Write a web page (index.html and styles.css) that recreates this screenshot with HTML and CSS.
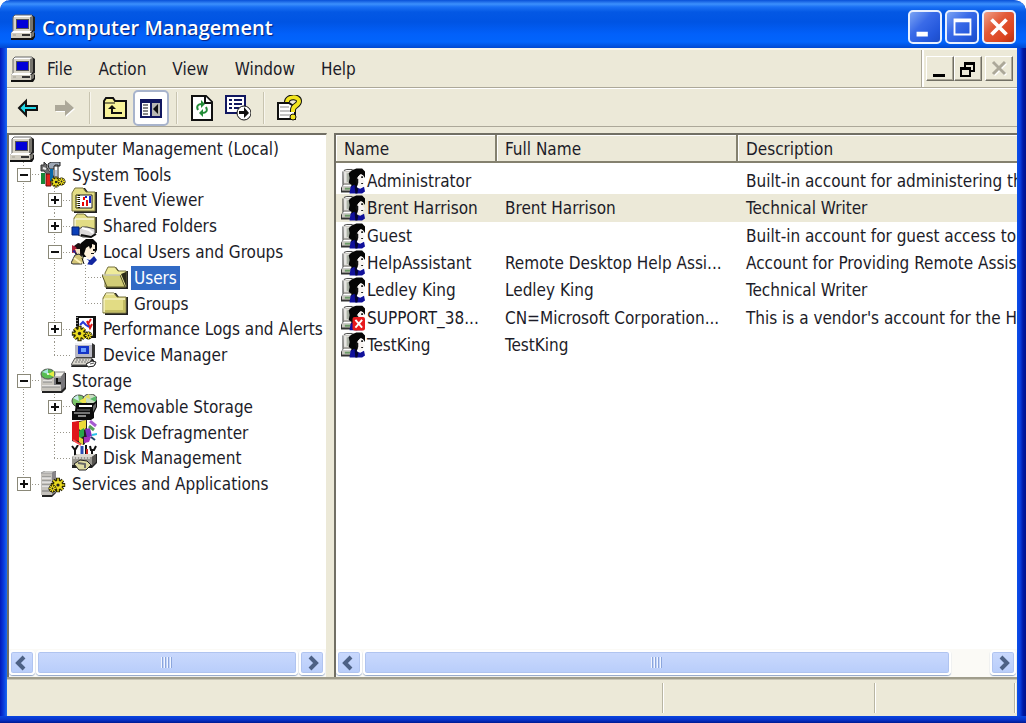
FILE: index.html
```html
<!DOCTYPE html>
<html lang="en">
<head>
<meta charset="utf-8">
<title>Computer Management</title>
<link rel="stylesheet" href="styles.css">
</head>
<body>
<svg class="defs" width="0" height="0" aria-hidden="true">
  <defs>
    <symbol id="gear" viewBox="-10 -10 20 20">
      <path d="M0-9V9M-9 0H9M-6-6L6 6M6-6L-6 6" stroke="#2c2800" stroke-width="5"/><circle r="6" fill="#2c2800"/>
      <path d="M0-8V8M-8 0H8M-6-6L6 6M6-6L-6 6" stroke="#ecdc20" stroke-width="2"/><circle r="5" fill="#ecdc20"/><circle r="2" fill="#222"/>
    </symbol>
    <symbol id="pc" viewBox="0 0 26 26">
      <path d="M6 1h16l3 2v14l-3 2H4V3z" fill="#222"/>
      <path d="M5 1h17v16H3V4z" fill="#d8d4c8"/><path d="M3 3l2-2h17l-2 2z" fill="#fff"/><path d="M3 3v14M3 3l2-2h17" stroke="#666" fill="none"/><path d="M20 3l3-1v14l-3 2z" fill="#77756e"/>
      <path d="M6 5h13v10H6z" fill="#555"/><path d="M7 6h11v8H7z" fill="#0000d8"/>
      <path d="M3 17h20l2 2v4l-2 3H1v-7z" fill="#111"/><path d="M3 17h19l-2 2H1z" fill="#fff"/><path d="M1 19h20v5H1z" fill="#d0ccc0"/><path d="M21 19l3-2v5l-3 2z" fill="#77756e"/>
      <path d="M12 20h8v2h-8z" fill="#333"/><path d="M3 20h3v2H3z" fill="#b9b6aa"/>
    </symbol>
    <symbol id="tools" viewBox="0 0 26 26">
      <path d="M1 3h3V0l3 3v3l11 14-3 3L4 9H1z" fill="#6d6d6d" stroke="#333"/><path d="M3 6l3 1" stroke="#eee" stroke-width="2"/>
      <path d="M8 2l3-2h9v4h-2V3h-3v4H9z" fill="#9ca6b4" stroke="#222"/><path d="M14 4h4v14h-4z" fill="#fff" stroke="#222"/><path d="M15 8h2v10h-2z" fill="#b8c4d8"/>
      <path d="M1 11h4v11H1z" fill="#168838"/><path d="M6 12h5v12H6z" fill="#e02018" stroke="#601010"/><path d="M10 7h3v12h-3z" fill="#0868a8"/>
      <use href="#gear" x="10" y="14" width="12" height="12"/><use href="#gear" x="17" y="15" width="9" height="9"/>
    </symbol>
    <symbol id="folder" viewBox="0 0 26 26">
      <path d="M3 7l3-5h8l3 4h9v18H3z" fill="#222"/><path d="M1 7l3-5h8l3 4h9v16H1z" fill="#e2dc84" stroke="#77733e"/><path d="M2 8h21M2 8v13M4 3h8" stroke="#fffde0" fill="none"/><path d="M21 9h2v12H3v-2h18z" fill="#c3bd63"/>
    </symbol>
    <symbol id="folder-open" viewBox="0 0 26 26">
      <path d="M4 7l3-5h7l3 4h9v18H4z" fill="#222"/><path d="M3 8l3-6h7l3 4h8v16H3z" fill="#efeb9a" stroke="#77733e"/><path d="M19 9l5-2v14z" fill="#2b2a18"/><path d="M0 10h18l5 12H5z" fill="#d2cd77" stroke="#555227"/><path d="M1 10h17" stroke="#fff"/>
    </symbol>
    <symbol id="event" viewBox="0 0 26 26">
      <path d="M3 6l3-5h8l3 4h9v21H3z" fill="#222"/><path d="M1 6l3-5h8l3 4h9v19H1z" fill="#e2dc84" stroke="#77733e"/>
      <path d="M5 8h16v13H5z" fill="#fff" stroke="#222"/><path d="M7 8v13" stroke="#111" stroke-width="4" stroke-dasharray="1 1"/><path d="M6 8v13" stroke="#e8e020" stroke-width="1" stroke-dasharray="1 1"/>
      <path d="M13 10v3M12 15v4" stroke="#e00" stroke-width="2"/><path d="M16 13v6" stroke="#e01010" stroke-width="2"/><path d="M19 9v7" stroke="#1020d0" stroke-width="2"/><path d="M15 9v2" stroke="#1020d0" stroke-width="2"/>
    </symbol>
    <symbol id="share" viewBox="0 0 26 26">
      <path d="M4 5l3-4h7l3 3h9v16H4z" fill="#333"/><path d="M3 5l3-4h7l3 3h8v15H3z" fill="#e2dc84" stroke="#77733e"/><path d="M4 6h19M4 6v8" stroke="#fff" fill="none"/>
      <path d="M7 17l4-3h5l8 2v5l-4 3h-8l-5-2z" fill="#dcdadb" stroke="#444"/><path d="M11 15l7 2 4 3" stroke="#fff" stroke-width="2" fill="none"/><path d="M10 22l10 2 5-3" stroke="#111" stroke-width="2" fill="none"/>
      <path d="M1 14h7v8H1z" fill="#0a3fb8" stroke="#052070"/>
    </symbol>
    <symbol id="group" viewBox="0 0 26 26">
      <path d="M3 7l4-3 4 1 2 9-3 5-6-4z" fill="#1a1010"/><path d="M1 6l4 2 2 5-6 1z" fill="#b02038"/><path d="M4 10h5v5H6z" fill="#f4dfc0"/><path d="M1 12l3-1 1 4z" fill="#229"/>
      <path d="M10 4l5-4h7l4 4v7l-2 3-3-2-2 6h-7l-3-7z" fill="#080808"/><path d="M15 9l3-2 1 3 2-2V5l3 1v6l-2 6-5 2-4-5z" fill="#fff2dc"/><path d="M22 10h3v2h-3zM20 14h3v1h-3z" fill="#111"/>
      <path d="M0 24l4-8 4-1 6 5 1 5H2z" fill="#d4c577" stroke="#333"/><path d="M3 19l7 5" stroke="#fff3b8" stroke-width="2"/><path d="M14 25l1-5 4 1 4-4 3 4-5 5z" fill="#1226a0"/><path d="M13 18l5 4-2 4h-5z" fill="#fff"/><path d="M11 19l2 6" stroke="#111"/>
    </symbol>
    <symbol id="perf" viewBox="0 0 26 26">
      <path d="M5 0h20v22H5z" fill="#111"/><path d="M8 2h14v18H8z" fill="#fff"/><path d="M6 1v20" stroke="#fff" stroke-width="1" stroke-dasharray="1 2"/><path d="M17 8l3-5M16 5l3 7 2-4" fill="none" stroke="#e01818" stroke-width="2"/><path d="M9 9l3-3 3 3 3 2" fill="none" stroke="#2838d8" stroke-width="2"/>
      <use href="#gear" x="0" y="9" width="17" height="17"/><use href="#gear" x="13" y="15" width="9" height="9"/>
    </symbol>
    <symbol id="device" viewBox="0 0 26 26">
      <path d="M5 1h16l3 2v13H5z" fill="#333"/><path d="M4 1h17v14H4z" fill="#b8b8c4"/><path d="M4 1h17v2H4z" fill="#f0f0f4"/><path d="M7 4h11v8H7z" fill="#1535c8"/><path d="M10 6h5v4h-5z" fill="#6da0ff"/><path d="M4 17h18l3 5-4 3H0z" fill="#222"/><path d="M4 16h17l-3 7H0z" fill="#dad7ce" stroke="#555"/><path d="M5 18h13M4 20h13" stroke="#777" stroke-dasharray="2 1"/><path d="M15 22l6-3 4 1-2 4-6 1z" fill="#fff" stroke="#222"/><path d="M19 22l4-1" stroke="#555"/>
    </symbol>
    <symbol id="storage" viewBox="0 0 26 26">
      <path d="M2 8l5-3h19v16l-4 4H2z" fill="#222"/><path d="M1 9h20v14H1z" fill="#c7c4bd"/><path d="M1 9l6-5h18l-4 5z" fill="#f4f3ee" stroke="#888"/><path d="M21 9l4-4v14l-4 4z" fill="#77767a"/><ellipse cx="8" cy="6" rx="7" ry="5" fill="#58bd51" stroke="#555"/><path d="M8 6l6-3v6z" fill="#e3ed44"/><path d="M8 6L2 4l6-3z" fill="#a8e4dc"/><circle cx="8" cy="6" r="1" fill="#fff"/><path d="M14 10h7v7h-7z" fill="#77787c"/><path d="M17 10v5h4" fill="none" stroke="#111" stroke-width="2"/><path d="M3 13h9M2 18h18" stroke="#fff"/><path d="M3 14h9M2 19h18" stroke="#888"/>
    </symbol>
    <symbol id="removable" viewBox="0 0 26 26">
      <ellipse cx="8" cy="7" rx="7" ry="6" fill="#7bc668" stroke="#444"/><ellipse cx="19" cy="5" rx="7" ry="5" fill="#c9dcc2" stroke="#444"/><path d="M8 7l7-4v8z" fill="#f0e551"/><path d="M19 5l6-3v6z" fill="#58b86a"/><path d="M8 7L2 4l5-3z" fill="#c9ecec"/><path d="M19 5l-5-2 4-3z" fill="#e5e060"/><path d="M5 9h18l3-3v7l-3 6v5l-3 2H1v-9h3z" fill="#0c0c0c"/><path d="M8 12h13" stroke="#fff" stroke-width="2"/><path d="M6 16h13" stroke="#777"/><path d="M3 19h16" stroke="#ddd" stroke-width="1"/><path d="M7 22h8" stroke="#888" stroke-width="2"/><path d="M22 12l3-3v4l-3 5z" fill="#666"/>
    </symbol>
    <symbol id="defrag" viewBox="0 0 26 26">
      <path d="M1 3l7-2 8-1v20l-3 5-12-4z" fill="#222"/><path d="M1 2l7-1v20l-7-1z" fill="#e0161b"/><path d="M8 2l7-2v8l-4 4-3-3z" fill="#ecdc39"/><path d="M8 11l5-3v8l-5 3z" fill="#28a64a"/><path d="M14 9l5-1 2 8-5 2z" fill="#7c2ec0"/><path d="M13 17h7l-2 5-5 1z" fill="#a430b8"/><path d="M8 17l4 2v6l-4-3z" fill="#e8d43a"/><path d="M2 20l8 5" stroke="#ff5050" stroke-width="2"/><path d="M19 1l6 5" stroke="#a65bd0" stroke-width="3"/><path d="M18 6l5 4" stroke="#58a057" stroke-width="3"/><path d="M21 15l5-1" stroke="#28c0e8" stroke-width="2"/><path d="M20 17l4 3" stroke="#246" stroke-width="2"/>
    </symbol>
    <symbol id="diskmgmt" viewBox="0 0 26 26">
      <path d="M1 1l3 4v5M7 0L4 5M15 0v10M25 1l-2 4h-3l-1-4M21 5v6" fill="none" stroke="#111" stroke-width="2"/><path d="M11 1v9" stroke="#2a4db5" stroke-width="3"/><path d="M16 4v6" stroke="#c22" stroke-width="2"/>
      <path d="M1 12l5-3h20v9l-5 5H1z" fill="#222"/><path d="M1 12h20v8H1z" fill="#98968f"/><path d="M1 12l5-3h19l-4 3z" fill="#dad8d2"/><path d="M21 12l4-3v8l-4 4z" fill="#55534f"/><path d="M2 13h18" stroke="#fff" stroke-dasharray="2 1"/><path d="M3 19l6-4 7 1 4 4-5 5H8z" fill="#dedba2" stroke="#222"/><path d="M7 18l7 1v4" fill="none" stroke="#666" stroke-width="2"/>
    </symbol>
    <symbol id="services" viewBox="0 0 26 26">
      <path d="M2 2l4-2h10v22l-4 4H2z" fill="#222"/><path d="M1 2h11v22H1z" fill="#c4c1bc"/><path d="M1 2l4-2h10l-3 2z" fill="#f7f6f1" stroke="#999"/><path d="M12 2l4-2v21l-4 3z" fill="#88858a"/><path d="M2 6h9M2 10h9M2 14h9M2 20h9" stroke="#777"/><path d="M2 7h9M2 11h9M2 15h9" stroke="#fff"/>
      <use href="#gear" x="10" y="6" width="16" height="16"/><use href="#gear" x="8" y="13" width="9" height="9"/>
    </symbol>
    <symbol id="user" viewBox="0 0 25 26">
      <path d="M3 2l3-1h8v17H2z" fill="#a8a6a1"/><path d="M4 3h9v12H4z" fill="#dddcd6"/><path d="M6 5h6v9H6z" fill="#a9b0a4"/><path d="M4 2h9M4 3v12" stroke="#fff"/><path d="M2 3v14M3 2l3-1h6" fill="none" stroke="#444"/>
      <path d="M2 17h14l2 8H0v-5z" fill="#333"/><path d="M3 17h12l-2 2H1z" fill="#fff"/><path d="M1 19h14v4H1z" fill="#c9c7c0"/><path d="M4 20h6v2H4z" fill="#6b9a68"/>
      <path d="M8 5l3-3 5-2h6l3 3v7l-2-3-3-1-3 4 1 6-3 5-5-1 1-3-3-2 1-5z" fill="#050505"/><path d="M18 8l3-2 2 1-1 3 3 4-2 1v3l-3 2-3-4-1-4z" fill="#f8f4f2"/><path d="M16 10l2 1v4l-1 2-2-4z" fill="#111"/><path d="M21 8h2v2h-2zM21 15h2v1h-2z" fill="#222"/>
      <path d="M9 25l1-6 4-2 3 3 3 1 4-2 1 5-3 2H9z" fill="#10109a"/><path d="M14 17l4 4-1 5h-2z" fill="#050530"/>
    </symbol>
    <symbol id="user-disabled" viewBox="0 0 25 26">
      <use href="#user"/><rect x="12" y="12" width="13" height="14" rx="2" fill="#e81a1c"/><path d="M15 15l7 8m0-8l-7 8" stroke="#fff" stroke-width="2"/>
    </symbol>
  </defs>
</svg>

<div class="window">
  <header class="titlebar">
    <svg class="icon"><use href="#pc"/></svg>
    <h1 class="title">Computer Management</h1>
    <div class="caption-buttons">
      <button class="caption" aria-label="Minimize"><svg viewBox="0 0 32 32"><path d="M7 21h12v5H7z" fill="#fff"/></svg></button>
      <button class="caption" aria-label="Maximize"><svg viewBox="0 0 32 32"><path d="M7 7h19v18H7zM9 11v12h15V11z" fill="#fff" fill-rule="evenodd"/></svg></button>
      <button class="caption caption-close" aria-label="Close"><svg viewBox="0 0 32 32"><path d="M8 8l16 16M24 8L8 24" stroke="#fff" stroke-width="4"/></svg></button>
    </div>
  </header>

  <nav class="menubar">
    <svg class="icon"><use href="#pc"/></svg>
    <div class="menus">
      <button class="menu">File</button>
      <button class="menu">Action</button>
      <button class="menu">View</button>
      <button class="menu">Window</button>
      <button class="menu">Help</button>
    </div>
    <div class="mdi">
      <button class="mdi-button" aria-label="Minimize child window"><svg viewBox="0 0 24 20"><path d="M5 15h12v3H5z"/></svg></button>
      <button class="mdi-button" aria-label="Restore child window"><svg viewBox="0 0 24 20"><path d="M8 3h11v10h-4v5H4V8h4zM10 6v2h5v3h2V6zM6 11v5h7v-5z" fill-rule="evenodd"/></svg></button>
      <button class="mdi-button mdi-close" aria-label="Close child window" disabled><svg viewBox="0 0 24 20"><path d="M7 4l12 12M19 4L7 16" stroke="#fff" stroke-width="3"/><path d="M6 3l12 12M18 3L6 15" stroke="#aca899" stroke-width="3"/></svg></button>
    </div>
  </nav>

  <div class="toolbar" role="toolbar" aria-label="Standard">
    <button class="tool" aria-label="Back"><svg viewBox="0 0 26 26"><path d="M4 13l7-7v5h11v4H11v5z" fill="#20d8e8" stroke="#111" stroke-width="2"/></svg></button>
    <button class="tool" aria-label="Forward" disabled><svg viewBox="0 0 26 26"><path d="M24 14l-9-7v4H5v6h10v5z" fill="#fff"/><path d="M23 13l-9-8v5H4v6h10v5z" fill="#aca899"/></svg></button>
    <span class="sep"></span>
    <button class="tool" aria-label="Up one level"><svg viewBox="0 0 26 26"><path d="M2 6l2-3h7l2 3h11v17H2z" fill="#f8f39a" stroke="#111" stroke-width="2"/><path d="M2 8h11" stroke="#111"/><path d="M10 10l-4 4h3v5h11v-2h-9v-3h3z" fill="#111"/></svg></button>
    <button class="tool tool-on" aria-label="Show console tree" aria-pressed="true"><svg viewBox="0 0 26 26"><path d="M2 4h22v19H2z" fill="#111760"/><path d="M4 8h8v13H4z" fill="#fff"/><path d="M14 8h8v13h-8z" fill="#b9b8b3"/><path d="M5 10h5M5 13h5M5 16h5M5 19h5" stroke="#111"/><path d="M20 9v10l-5-5z" fill="#111"/></svg></button>
    <span class="sep"></span>
    <button class="tool" aria-label="Refresh"><svg viewBox="0 0 26 26"><path d="M3 1h14l6 6v18H3z" fill="#fff" stroke="#111" stroke-width="2"/><path d="M16 1v7h7" fill="#fff" stroke="#111" stroke-width="2"/><path d="M9 15c-2-4 0-6 4-6" fill="none" stroke="#238c38" stroke-width="2"/><path d="M12 5l4 4-4 4z" fill="#238c38"/><path d="M17 12c2 4 0 6-4 6" fill="none" stroke="#238c38" stroke-width="2"/><path d="M14 14l-4 4 4 4z" fill="#238c38"/></svg></button>
    <button class="tool" aria-label="Export list"><svg viewBox="0 0 26 26"><path d="M1 1h19v17H1z" fill="#fff" stroke="#111760" stroke-width="2"/><path d="M4 5h3M9 5h8M4 9h3M9 9h8M4 13h3M9 13h5" stroke="#111760" stroke-width="2"/><circle cx="19" cy="18" r="7" fill="#fff" stroke="#111"/><path d="M14 16h5v-4l5 6-5 5v-4h-5z" fill="#111"/></svg></button>
    <span class="sep"></span>
    <button class="tool" aria-label="Help"><svg viewBox="0 0 26 26"><path d="M2 8h11l6 4v12H2z" fill="#fff" stroke="#111" stroke-width="2"/><path d="M4 12h9M4 16h10M4 20h10" stroke="#888"/><path d="M11 7c0-6 12-6 12-1 0 5-6 4-6 9v2" fill="none" stroke="#111" stroke-width="6"/><path d="M11 7c0-6 12-6 12-1 0 5-6 4-6 9v2" fill="none" stroke="#f3e51f" stroke-width="4"/><circle cx="17" cy="22" r="3" fill="#f3e51f" stroke="#111"/></svg></button>
  </div>

  <main class="panes">
    <section class="pane tree-pane" aria-label="Console tree">
      <ul class="tree">
        <li class="node"><svg class="icon"><use href="#pc"/></svg><span class="label">Computer Management (Local)</span></li>
        <li class="node"><span class="guide tee"><button class="toggle minus" aria-label="Collapse System Tools"></button></span><svg class="icon"><use href="#tools"/></svg><span class="label">System Tools</span></li>
        <li class="node"><span class="guide line"></span><span class="guide tee"><button class="toggle plus" aria-label="Expand Event Viewer"></button></span><svg class="icon"><use href="#event"/></svg><span class="label">Event Viewer</span></li>
        <li class="node"><span class="guide line"></span><span class="guide tee"><button class="toggle plus" aria-label="Expand Shared Folders"></button></span><svg class="icon"><use href="#share"/></svg><span class="label">Shared Folders</span></li>
        <li class="node"><span class="guide line"></span><span class="guide tee"><button class="toggle minus" aria-label="Collapse Local Users and Groups"></button></span><svg class="icon"><use href="#group"/></svg><span class="label">Local Users and Groups</span></li>
        <li class="node"><span class="guide line"></span><span class="guide line"></span><span class="guide tee"></span><svg class="icon"><use href="#folder-open"/></svg><span class="label selected">Users</span></li>
        <li class="node"><span class="guide line"></span><span class="guide line"></span><span class="guide end"></span><svg class="icon"><use href="#folder"/></svg><span class="label">Groups</span></li>
        <li class="node"><span class="guide line"></span><span class="guide tee"><button class="toggle plus" aria-label="Expand Performance Logs and Alerts"></button></span><svg class="icon"><use href="#perf"/></svg><span class="label">Performance Logs and Alerts</span></li>
        <li class="node"><span class="guide line"></span><span class="guide end"></span><svg class="icon"><use href="#device"/></svg><span class="label">Device Manager</span></li>
        <li class="node"><span class="guide tee"><button class="toggle minus" aria-label="Collapse Storage"></button></span><svg class="icon"><use href="#storage"/></svg><span class="label">Storage</span></li>
        <li class="node"><span class="guide line"></span><span class="guide tee"><button class="toggle plus" aria-label="Expand Removable Storage"></button></span><svg class="icon"><use href="#removable"/></svg><span class="label">Removable Storage</span></li>
        <li class="node"><span class="guide line"></span><span class="guide tee"></span><svg class="icon"><use href="#defrag"/></svg><span class="label">Disk Defragmenter</span></li>
        <li class="node"><span class="guide line"></span><span class="guide end"></span><svg class="icon"><use href="#diskmgmt"/></svg><span class="label">Disk Management</span></li>
        <li class="node"><span class="guide end"><button class="toggle plus" aria-label="Expand Services and Applications"></button></span><svg class="icon"><use href="#services"/></svg><span class="label">Services and Applications</span></li>
      </ul>
      <div class="scrollbar">
        <button class="arrow" aria-label="Scroll tree left"><svg viewBox="0 0 20 20"><path d="M12 4l-6 6 6 6"/></svg></button>
        <div class="track"><div class="thumb thumb-full"><span class="grip"></span></div></div>
        <button class="arrow" aria-label="Scroll tree right"><svg viewBox="0 0 20 20"><path d="M8 4l6 6-6 6"/></svg></button>
      </div>
    </section>

    <section class="pane list-pane" aria-label="Users">
      <div class="list">
        <table class="users">
          <colgroup><col class="col-name"><col class="col-full"><col></colgroup>
          <thead><tr><th>Name</th><th>Full Name</th><th>Description</th></tr></thead>
          <tbody>
            <tr><td><div class="name"><svg class="user-icon"><use href="#user"/></svg>Administrator</div></td><td></td><td>Built-in account for administering th</td></tr>
            <tr class="current"><td><div class="name"><svg class="user-icon"><use href="#user"/></svg>Brent Harrison</div></td><td>Brent Harrison</td><td>Technical Writer</td></tr>
            <tr><td><div class="name"><svg class="user-icon"><use href="#user"/></svg>Guest</div></td><td></td><td>Built-in account for guest access to</td></tr>
            <tr><td><div class="name"><svg class="user-icon"><use href="#user"/></svg>HelpAssistant</div></td><td>Remote Desktop Help Assi...</td><td>Account for Providing Remote Assis</td></tr>
            <tr><td><div class="name"><svg class="user-icon"><use href="#user"/></svg>Ledley King</div></td><td>Ledley King</td><td>Technical Writer</td></tr>
            <tr><td><div class="name"><svg class="user-icon"><use href="#user-disabled"/></svg>SUPPORT_38...</div></td><td>CN=Microsoft Corporation...</td><td>This is a vendor's account for the H</td></tr>
            <tr><td><div class="name"><svg class="user-icon"><use href="#user"/></svg>TestKing</div></td><td>TestKing</td><td></td></tr>
          </tbody>
        </table>
      </div>
      <div class="scrollbar">
        <button class="arrow" aria-label="Scroll list left"><svg viewBox="0 0 20 20"><path d="M12 4l-6 6 6 6"/></svg></button>
        <div class="track"><div class="thumb thumb-part"><span class="grip"></span></div></div>
        <button class="arrow" aria-label="Scroll list right"><svg viewBox="0 0 20 20"><path d="M8 4l6 6-6 6"/></svg></button>
      </div>
    </section>
  </main>

  <footer class="statusbar"><span class="status"></span><span class="status"></span><span class="status"></span></footer>
</div>
</body>
</html>
```
FILE: styles.css
```css
* { box-sizing: border-box; }

body {
  margin: 0;
  background: #fff;
  color: #1c1c28;
  font: 17px/24px "DejaVu Sans Condensed", "Noto Sans", sans-serif;
}

button {
  margin: 0;
  padding: 0;
  border: 0;
  background: none;
  color: inherit;
  font: inherit;
}

.defs { display: block; position: absolute; }
.icon { flex: none; width: 26px; height: 26px; }

.window {
  display: flex;
  flex-direction: column;
  height: 100vh;
  overflow: hidden;
  padding: 0 9px 7px 7px;
  border-radius: 10px 12px 0 0;
  background:
    linear-gradient(#0845e0, #0831c8 4px, #001a90) bottom / 100% 7px no-repeat,
    linear-gradient(90deg, #0019b8, #0a3fe0 4px, #1a6af0 7px, transparent 7px),
    linear-gradient(270deg, #00108a, #0019a8 3px, #0a3fe0 6px, #0a50e8 9px, transparent 9px);
}

/* Title bar */
.titlebar {
  display: flex;
  flex: none;
  align-items: center;
  gap: 6px;
  height: 48px;
  margin: 0 -9px 0 -7px;
  padding: 6px 10px 0;
  background: linear-gradient(#0850d8, #3c90fc 4px, #1a70f4 7px, #0458e4 12px, #0054e3 22px, #0260fa 34px, #0264fc 42px, #0048d0 48px);
}
.title {
  flex: 1;
  margin: 0;
  padding-top: 2px;
  color: #fff;
  font: 600 20px/28px "Open Sans", "Noto Sans", sans-serif;
  text-shadow: 1px 1px 1px #0a1f78;
  white-space: nowrap;
}
.caption-buttons { display: flex; gap: 3px; }
.caption {
  width: 34px;
  height: 34px;
  border: 2px solid #e8f0ff;
  border-radius: 5px;
  background: linear-gradient(135deg, #7ca4f4, #3a6be8 40%, #2458dc 75%, #1c4cc8);
}
.caption svg { display: block; width: 30px; height: 30px; }
.caption-close { background: linear-gradient(135deg, #f0a088, #e25a38 40%, #dc4420 75%, #b83010); }

/* Menu bar */
.menubar {
  display: flex;
  flex: none;
  height: 40px;
  align-items: center;
  padding-left: 3px;
  border-top: 2px solid #f8f6ee;
  border-bottom: 1px solid #aca899;
  background: #ece9d8;
}
.menus { display: flex; flex: 1; gap: 26px; padding: 1px 0 0 11px; }
.mdi {
  display: flex;
  align-self: stretch;
  align-items: center;
  padding: 0 4px;
  border-left: 1px solid #aca899;
  box-shadow: inset 2px 0 #fff;
}
.mdi-button {
  width: 28px;
  height: 25px;
  padding: 1px;
  border: 1px solid;
  border-color: #fff #716f64 #716f64 #fff;
  box-shadow: inset -1px -1px #aca899;
}
.mdi-button svg { display: block; width: 24px; height: 20px; }
.mdi-close { margin-left: 3px; }

/* Toolbar */
.toolbar {
  display: flex;
  flex: none;
  align-items: center;
  height: 39px;
  padding-left: 3px;
  border-top: 1px solid #fff;
  border-bottom: 1px solid #aca899;
  background: #ece9d8;
}
.tool {
  display: grid;
  place-items: center;
  width: 36px;
  height: 36px;
  border: 1px solid transparent;
  border-radius: 5px;
}
.tool svg { width: 26px; height: 26px; }
.tool-on { border: 2px solid #a8b4cc; background: #fff; }
.sep {
  width: 2px;
  height: 32px;
  margin: 0 6px 0 7px;
  border-left: 1px solid #c8c4b0;
  border-right: 1px solid #f8f6ee;
}

/* Panes */
.panes {
  display: grid;
  flex: 1;
  grid-template-columns: 320px 1fr;
  gap: 7px;
  min-height: 0;
  padding-top: 6px;
  background: #ece9d8;
}
.pane {
  display: flex;
  flex-direction: column;
  min-width: 0;
  min-height: 0;
  overflow: hidden;
  border-top: 2px solid #716f64;
  border-left: 2px solid #716f64;
  background: #fff;
}
.tree-pane { border-right: 1px solid #ece9d8; }

.tree {
  display: grid;
  flex: none;
  grid-auto-rows: 1fr;
  height: 362px;
  margin: 0;
  padding: 1px 0 0;
  list-style: none;
}
.node { display: flex; min-height: 0; align-items: center; white-space: nowrap; }
.label { margin-left: 3px; padding: 0 3px; }
.selected { background: #316ac5; color: #fff; }

.guide {
  --dots-v: repeating-linear-gradient(#98958a 0 1px, transparent 1px 3px);
  --dots-h: repeating-linear-gradient(90deg, #98958a 0 1px, transparent 1px 3px);
  display: flex;
  flex: none;
  align-items: center;
  width: 31px;
  height: 100%;
  padding-left: 8px;
  background-repeat: no-repeat;
}
.line { background-image: var(--dots-v); background-position: 14px 0; background-size: 1px 100%; }
.tee {
  background-image: var(--dots-v), var(--dots-h);
  background-position: 14px 0, 14px 50%;
  background-size: 1px 100%, 17px 1px;
}
.end {
  background-image: var(--dots-v), var(--dots-h);
  background-position: 14px 0, 14px 50%;
  background-size: 1px 50%, 17px 1px;
}
.toggle {
  width: 14px;
  height: 14px;
  border: 1px solid #8a8878;
  background-color: #fff;
  background-image: linear-gradient(#111, #111), linear-gradient(#111, #111);
  background-position: center;
  background-repeat: no-repeat;
}
.minus { background-size: 8px 2px; }
.plus { background-size: 8px 2px, 2px 8px; }

.node:nth-child(n+11):nth-child(-n+13) .line,
.node:nth-child(n+3):nth-child(-n+9) .line { background-color: transparent; }

/* User list */
.list { flex: 1; min-height: 0; overflow: hidden; }
.users { width: 100%; height: 224px; border-spacing: 0; table-layout: fixed; white-space: nowrap; }
.col-name { width: 161px; }
.col-full { width: 241px; }
.users th {
  height: 28px;
  padding: 2px 0 0 8px;
  border-right: 2px solid #84816f;
  border-bottom: 2px solid #84816f;
  background: #ece9d8;
  box-shadow: inset 1px 1px #fff;
  font-weight: 400;
  text-align: left;
}
.users th:last-child { border-right: 0; }
.users tbody::before { content: ""; display: table-row; height: 4px; }
.users td { height: 27px; padding: 0 0 0 8px; overflow: hidden; }
.users td:first-child { padding-left: 5px; }
.current td { background: #ece9d8; }
.name { display: flex; align-items: center; gap: 2px; }
.user-icon { flex: none; width: 24px; height: 26px; }

/* Scroll bars */
.scrollbar {
  display: flex;
  flex: none;
  gap: 1px;
  height: 28px;
  margin-top: auto;
  padding: 1px 1px 2px 0;
  background: #fbfaf6;
}
.arrow, .thumb {
  border: 2px solid #fff;
  border-radius: 4px;
  background: linear-gradient(#cad9fd, #b8cdfa);
  box-shadow: inset 0 0 0 1px #b0c4f0, 0 1px 1px #8ea4c8;
}
.arrow { flex: none; width: 26px; }
.arrow svg { display: block; width: 20px; height: 20px; margin: auto; fill: none; stroke: #4d6185; stroke-width: 4px; }
.track { flex: 1; min-width: 0; }
.thumb { display: grid; place-items: center; height: 100%; }
.thumb-part { width: 94%; }
.grip {
  width: 12px;
  height: 11px;
  background: repeating-linear-gradient(90deg, #f0f5ff 0 1px, #8ca6dc 1px 2px, transparent 2px 3px);
}

/* Status bar */
.statusbar {
  display: grid;
  flex: none;
  grid-template-columns: 657fr 213fr 140fr;
  height: 39px;
  padding: 4px 2px 3px 0;
  border-top: 2px solid #a09d8c;
  background: #ece9d8;
  box-shadow: inset 0 1px #c8c5b5;
}
.status { border-right: 1px solid #b8b5a2; box-shadow: 1px 0 #fff; }
```
